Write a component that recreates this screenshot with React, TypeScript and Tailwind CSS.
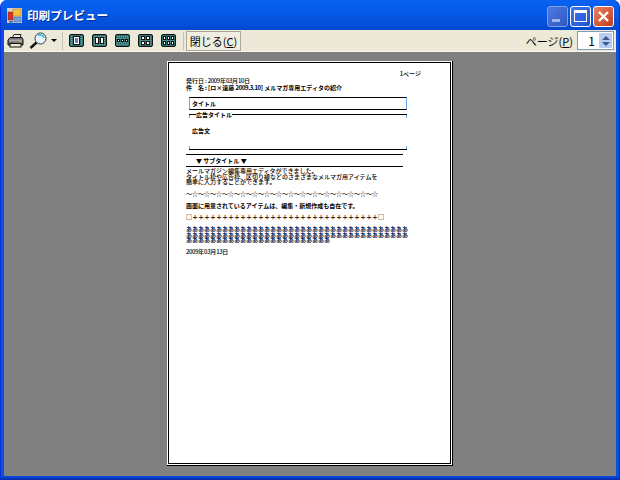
const font = { fontFamily: '"Noto Sans CJK JP", sans-serif' };

function Film({ id, panes, tint }: { id: string; panes: number[][]; tint?: boolean }) {
  return (
    <svg width="15" height="13" viewBox="0 0 15 13" className="shrink-0 mr-[8px]">
      <defs>
        <pattern id={id} width="2" height="2" patternUnits="userSpaceOnUse">
          <rect width="2" height="2" fill="#3f8080" />
          <rect width="1" height="1" fill="#5f9a98" />
          <rect x="1" y="1" width="1" height="1" fill="#2c6666" />
        </pattern>
      </defs>
      <rect x="0.5" y="0.5" width="14" height="12" rx="1.5" fill={`url(#${id})`} stroke="#111" />
      {panes.map((p, i) => (
        <rect key={i} x={p[0] + 0.5} y={p[1] + 0.5} width={p[2] - 1} height={p[3] - 1} fill="#fff" stroke="#111" />
      ))}
      {tint && <rect x="6" y="4" width="3" height="5" fill="#6f78c8" />}
    </svg>
  );
}

function N({ children }: { children: string }) {
  return <span className="tracking-[-0.4px]">{children}</span>;
}

const rows = "□" + "＋".repeat(31) + "□";
const stars = "～☆".repeat(16);
const hira = "あ".repeat(98);

export default function App() {
  return (
    <div className="w-[620px] h-[480px] bg-white text-black" style={font}>
      <div className="w-full h-full flex flex-col overflow-hidden rounded-t-[7px] border-x border-[#0831d9] bg-[#0a50e0]">
        <div className="h-[30px] shrink-0 -mx-[1px] bg-gradient-to-b from-[#0a62f2] via-[#0558e6] to-[#0448d0] flex items-center pl-[7px] pr-[6px]">
          <svg width="15" height="15" viewBox="0 0 15 15" className="shrink-0">
            <rect width="15" height="15" fill="#d8d4c8" />
            <rect x="1" y="4" width="5" height="8" fill="#d83020" stroke="#802010" strokeWidth="0.5" />
            <rect x="6" y="1" width="8" height="7" fill="#f8c040" stroke="#a87818" strokeWidth="0.5" />
            <rect x="7" y="9" width="7" height="5" fill="#78a0d8" stroke="#3060a0" strokeWidth="0.5" />
            <rect x="2" y="13" width="4" height="1.5" fill="#3060b0" />
          </svg>
          <div className="ml-[5px] text-[11.6px] leading-[20px] font-bold text-white [text-shadow:1px_1px_0_#0a2a90]">印刷プレビュー</div>
          <div className="ml-auto flex gap-[2px] mt-[2px]">
            <div className="w-[21px] h-[21px] rounded-[3px] border border-[#7f9de8] bg-gradient-to-br from-[#4f7be0] to-[#2f56c0] flex items-end justify-start pl-[4px] pb-[4px]">
              <div className="w-[8px] h-[3px] bg-[#9fb6ea]" />
            </div>
            <div className="w-[21px] h-[21px] rounded-[3px] border border-white bg-gradient-to-br from-[#3f78ee] to-[#1f52d0] flex items-center justify-center">
              <div className="w-[13px] h-[12px] border border-white border-t-[3px]" />
            </div>
            <div className="w-[21px] h-[21px] rounded-[3px] border border-white bg-gradient-to-br from-[#e88060] to-[#c23a18] flex items-center justify-center">
              <svg width="13" height="13" viewBox="0 0 13 13"><path d="M2 2 L11 11 M11 2 L2 11" stroke="#fff" strokeWidth="2.4" /></svg>
            </div>
          </div>
        </div>
        <div className="flex-1 min-h-0 mx-[3px] flex flex-col bg-[#808080]">
          <div className="h-[22px] shrink-0 bg-[#ece9d8] border-b border-[#f8f6ee] flex items-center pl-[3px] pr-[2px]">
            <svg width="17" height="16" viewBox="0 0 17 16" className="shrink-0">
              <path d="M5 5 L7 1.5 H14 L13 5 Z" fill="#e8e8e8" stroke="#222" />
              <path d="M1 7 L3 4.5 H15 L16 6.5 V12 H1 Z" fill="#6f6f6f" stroke="#111" />
              <rect x="2" y="6.5" width="13" height="2" fill="#a8a8a8" />
              <rect x="3" y="10.5" width="11" height="3.5" fill="#e8e8c8" stroke="#111" />
              <rect x="12.5" y="8.5" width="2" height="1" fill="#d8c020" />
            </svg>
            <svg width="18" height="17" viewBox="0 0 18 17" className="ml-[5px] shrink-0">
              <circle cx="11.5" cy="6.5" r="5.5" fill="#e6f6fb" stroke="#2a3a4a" />
              <path d="M9 3.5 A4 4 0 0 1 15 6" stroke="#48b8d8" strokeWidth="1.6" fill="none" />
              <path d="M7.5 10.5 L1.5 16" stroke="#111" strokeWidth="2.4" />
            </svg>
            <svg width="6" height="3" viewBox="0 0 6 3" className="ml-[4px] shrink-0"><path d="M0 0 H6 L3 3 Z" fill="#000" /></svg>
            <div className="w-[1px] h-[18px] bg-[#c5c2b8] ml-[5px] mr-[6px] shrink-0" />
            <Film id="f1" tint panes={[[4, 2, 7, 9]]} />
            <Film id="f2" panes={[[3, 3, 4, 7], [8, 3, 4, 7]]} />
            <Film id="f3" panes={[[2, 5, 3, 3], [6, 5, 3, 3], [10, 5, 3, 3]]} />
            <Film id="f4" panes={[[3, 2, 4, 4], [8, 2, 4, 4], [3, 7, 4, 4], [8, 7, 4, 4]]} />
            <Film id="f5" panes={[[2, 2, 3, 4], [6, 2, 3, 4], [10, 2, 3, 4], [2, 7, 3, 4], [6, 7, 3, 4], [10, 7, 3, 4]]} />
            <div className="w-[1px] h-[18px] bg-[#c5c2b8] -ml-[1px] mr-[2px] shrink-0" />
            <div className="h-[20px] w-[55px] border border-[#aca899] bg-[#f0eee2] text-[11px] leading-[18px] text-center">閉じる(<span className="underline">C</span>)</div>
            <div className="ml-auto text-[11px] leading-[20px]">ページ(<span className="underline">P</span>)</div>
            <div className="ml-[4px] w-[37px] h-[19px] bg-white border border-[#7f9db9] flex items-center justify-end text-[12px]">
              <span className="mr-[4px]">1</span>
              <div className="w-[13px] h-[15px] mr-[1px] bg-[#b9cdf2] flex flex-col items-center justify-center gap-[2px] rounded-[1px]">
                <div className="w-0 h-0 border-x-[4px] border-x-transparent border-b-[4px] border-b-[#3d5a8f]" />
                <div className="w-0 h-0 border-x-[4px] border-x-transparent border-t-[4px] border-t-[#3d5a8f]" />
              </div>
            </div>
          </div>
          <div className="flex-1 min-h-0 flex justify-center pt-[9px]">
            <div className="w-[286px] h-[405px] bg-white border-r border-b border-black pr-[1px] pb-[1px] pl-[1px] pt-[1px]">
              <div className="w-full h-full border border-black flex flex-col pl-[17px] pt-[8px] text-[6px] leading-[6px] font-medium text-black">
                <div className="text-right pr-[29px]">1ページ</div>
                <div className="leading-[7px]">発行日<span className="mx-[1px]">:</span><N>2009</N>年<N>03</N>月<N>10</N>日</div>
                <div className="leading-[7px] font-bold whitespace-nowrap">件　名<span className="mx-[1px]">:</span>[ロ×遠藤 <N>2009.3.10</N>] メルマガ専用エディタの紹介</div>
                <div className="mt-[6px] ml-[3px] w-[218px] h-[13px] border border-black border-x-[#6aa8e8] pl-[2px] leading-[11px] font-bold">タイトル</div>
                <div className="mt-[4px] ml-[3px] w-[218px] h-[36px] border-t border-b border-black relative">
                  <div className="absolute left-[7px] -top-[3px] bg-white font-bold">広告タイトル</div>
                  <div className="absolute left-0 top-0 w-[1px] h-[3px] bg-[#6aa8e8]" />
                  <div className="absolute right-0 top-0 w-[1px] h-[3px] bg-[#6aa8e8]" />
                  <div className="absolute left-0 bottom-0 w-[1px] h-[3px] bg-[#6aa8e8]" />
                  <div className="absolute right-0 bottom-0 w-[1px] h-[3px] bg-[#6aa8e8]" />
                  <div className="absolute left-[3px] top-[13px] font-bold">広告文</div>
                </div>
                <div className="mt-[4px] w-[217px] h-[13px] border-t border-b border-black pl-[10px] leading-[11px] font-bold">▼ サブタイトル ▼</div>
                <div className="mt-[1px] leading-[5.5px] whitespace-nowrap">
                  メールマガジン編集専用エディタができました。<br />
                  タイトル枠や広告枠、区切り線などのさまざまなメルマガ用アイテムを<br />
                  簡単に入力することができます。
                </div>
                <div className="mt-[6.5px] whitespace-nowrap">{stars}</div>
                <div className="mt-[6px] font-bold">画面に用意されているアイテムは、編集・新規作成も自在です。</div>
                <div className="mt-[5px] whitespace-nowrap font-bold">{rows}</div>
                <div className="mt-[6px] w-[223px] leading-[5.5px] break-all font-bold text-[#102a50]">{hira}</div>
                <div className="mt-[6px]"><N>2009</N>年<N>03</N>月<N>13</N>日</div>
              </div>
            </div>
          </div>
        </div>
        <div className="h-[4px] shrink-0 bg-gradient-to-b from-[#0a50e0] to-[#0628a8]" />
      </div>
    </div>
  );
}
